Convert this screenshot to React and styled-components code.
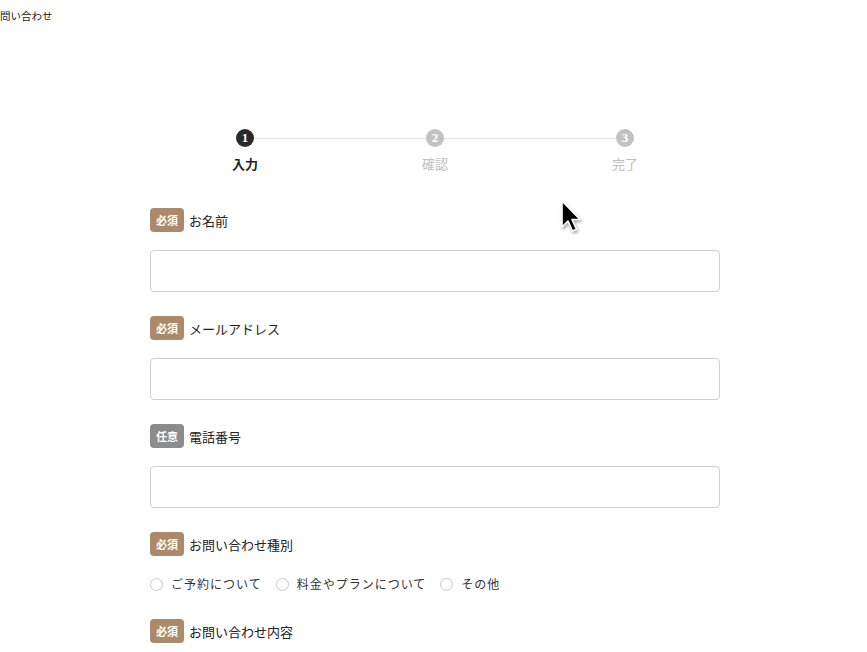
import React from "react";
import styled, { createGlobalStyle } from "styled-components";

const GlobalStyle = createGlobalStyle`
  body {
    margin: 0;
    background: #fff;
    font-family: "Liberation Serif", "Noto Sans CJK JP", serif;
    color: #222;
  }
`;

const Page = styled.div`
  position: relative;
  width: 867px;
  height: 652px;
  overflow: hidden;
`;

const PageTitle = styled.h1`
  margin: 0;
  padding-top: 10px;
  font-size: 10.5px;
  font-weight: normal;
  line-height: 14px;
  color: #222;
`;

const Container = styled.div`
  width: 570px;
  margin: 105px auto 0 150px;
`;

const Stepper = styled.ol`
  position: relative;
  display: grid;
  grid-template-columns: repeat(3, 1fr);
  margin: 0 0 34px;
  padding: 0;
  list-style: none;

  &::before {
    content: "";
    position: absolute;
    top: 9px;
    left: 95px;
    right: 95px;
    height: 1px;
    background: #e2e2e2;
  }
`;

const Step = styled.li`
  position: relative;
  display: flex;
  flex-direction: column;
  align-items: center;
  gap: 9px;
  color: ${(p) => (p.$active ? "#222" : "#bdbdbd")};
  font-weight: ${(p) => (p.$active ? "bold" : "normal")};
  font-size: 13px;
  line-height: 18px;
`;

const StepDot = styled.span`
  display: flex;
  align-items: center;
  justify-content: center;
  width: 18px;
  height: 18px;
  border-radius: 50%;
  background: ${(p) => (p.$active ? "#2a2a2a" : "#c2c2c2")};
  color: #fff;
  font-family: "Liberation Serif", serif;
  font-weight: bold;
  font-size: 13px;
`;

const Field = styled.div`
  margin-bottom: ${(p) => (p.$loose ? "25px" : "24px")};
`;

const Label = styled.div`
  display: flex;
  align-items: center;
  gap: 5px;
  height: 24px;
  font-size: 13px;
  margin-bottom: 18px;
`;

const Badge = styled.span`
  display: inline-flex;
  align-items: center;
  justify-content: center;
  width: 34px;
  height: 24px;
  border-radius: 4px;
  background: ${(p) => (p.$required ? "#ab8a6c" : "#8c8c8c")};
  color: #fff;
  font-size: 11px;
  font-weight: bold;
`;

const Input = styled.input`
  display: block;
  box-sizing: border-box;
  width: 100%;
  height: 42px;
  border: 1px solid #cfcfcf;
  border-radius: 4px;
  padding: 0 12px;
  font-size: 14px;
  outline: none;
`;

const RadioGroup = styled.div`
  display: flex;
  align-items: center;
  gap: 14px;
  margin-top: 1px;
  height: 20px;
`;

const RadioLabel = styled.label`
  display: flex;
  align-items: center;
  gap: 8px;
  font-size: 12px;
  letter-spacing: 1px;
  color: #333;
`;

const RadioCircle = styled.span`
  box-sizing: border-box;
  width: 13px;
  height: 13px;
  border-radius: 50%;
  border: 1px solid #c8c8c8;
  background: #fff;
`;

const Cursor = styled.svg`
  position: absolute;
  left: 560px;
  top: 200px;
  width: 22px;
  height: 36px;
  filter: drop-shadow(1px 2px 1.5px rgba(0, 0, 0, 0.35));
`;

const fields = [
  { label: "お名前", required: true },
  { label: "メールアドレス", required: true },
  { label: "電話番号", required: false },
];

const kinds = ["ご予約について", "料金やプランについて", "その他"];

export default function App() {
  return (
    <Page>
      <GlobalStyle />
      <PageTitle>問い合わせ</PageTitle>
      <Container>
        <Stepper>
          <Step $active>
            <StepDot $active>1</StepDot>入力
          </Step>
          <Step>
            <StepDot>2</StepDot>確認
          </Step>
          <Step>
            <StepDot>3</StepDot>完了
          </Step>
        </Stepper>

        {fields.map((f) => (
          <Field key={f.label}>
            <Label>
              <Badge $required={f.required}>{f.required ? "必須" : "任意"}</Badge>
              {f.label}
            </Label>
            <Input type="text" />
          </Field>
        ))}

        <Field $loose>
          <Label>
            <Badge $required>必須</Badge>
            お問い合わせ種別
          </Label>
          <RadioGroup>
            {kinds.map((k) => (
              <RadioLabel key={k}>
                <RadioCircle />
                {k}
              </RadioLabel>
            ))}
          </RadioGroup>
        </Field>

        <Field>
          <Label>
            <Badge $required>必須</Badge>
            お問い合わせ内容
          </Label>
        </Field>
      </Container>

      <Cursor viewBox="0 0 22 36">
        <path
          d="M2 1 L2 27 L8 21 L12.5 31 L16.5 29.3 L12 19.5 L20 19.5 Z"
          fill="#000"
          stroke="#fff"
          strokeWidth="1.6"
          strokeLinejoin="round"
        />
      </Cursor>
    </Page>
  );
}
